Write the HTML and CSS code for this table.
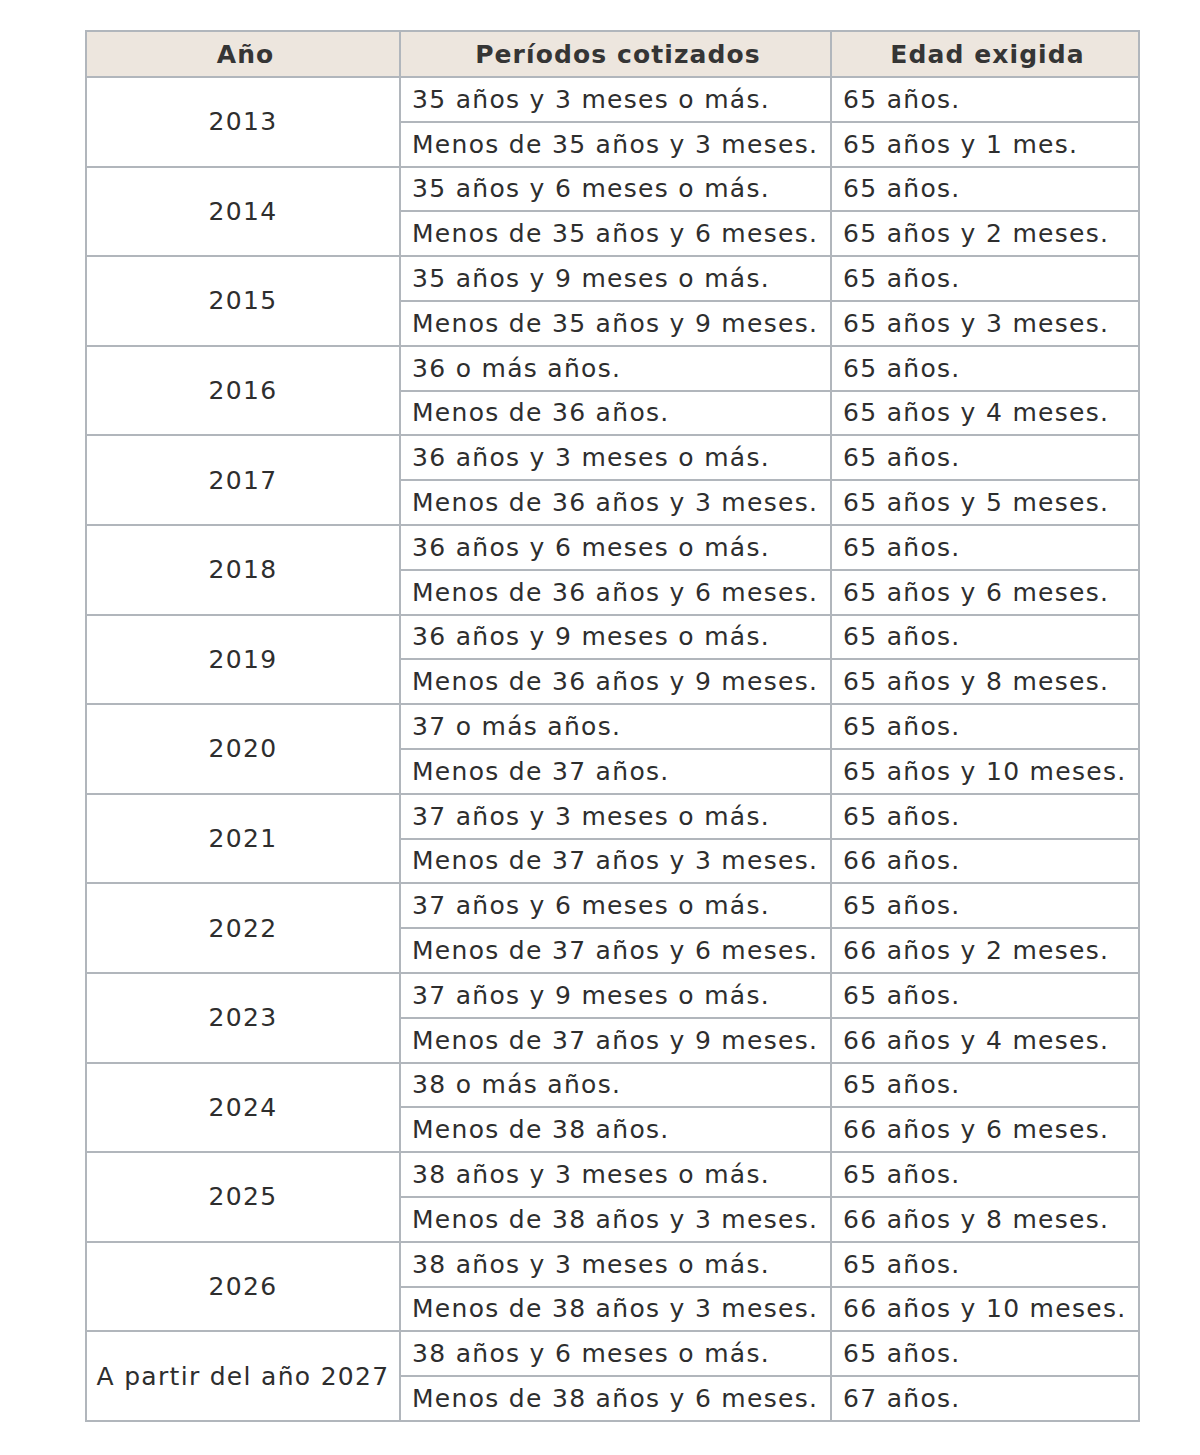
FILE: index.html
```html
<!DOCTYPE html>
<html lang="es">
<head>
<meta charset="utf-8">
<title>Edad de jubilación</title>
<link rel="stylesheet" href="styles.css">
</head>
<body>
<table class="tabla">
  <colgroup>
    <col class="c-year">
    <col class="c-period">
    <col class="c-age">
  </colgroup>
  <thead>
    <tr><th>Año</th><th>Períodos cotizados</th><th>Edad exigida</th></tr>
  </thead>
  <tbody>
    <tr><td class="year" rowspan="2">2013</td><td>35 años y 3 meses o más.</td><td>65 años.</td></tr>
    <tr><td>Menos de 35 años y 3 meses.</td><td>65 años y 1 mes.</td></tr>
    <tr><td class="year" rowspan="2">2014</td><td>35 años y 6 meses o más.</td><td>65 años.</td></tr>
    <tr><td>Menos de 35 años y 6 meses.</td><td>65 años y 2 meses.</td></tr>
    <tr><td class="year" rowspan="2">2015</td><td>35 años y 9 meses o más.</td><td>65 años.</td></tr>
    <tr><td>Menos de 35 años y 9 meses.</td><td>65 años y 3 meses.</td></tr>
    <tr><td class="year" rowspan="2">2016</td><td>36 o más años.</td><td>65 años.</td></tr>
    <tr><td>Menos de 36 años.</td><td>65 años y 4 meses.</td></tr>
    <tr><td class="year" rowspan="2">2017</td><td>36 años y 3 meses o más.</td><td>65 años.</td></tr>
    <tr><td>Menos de 36 años y 3 meses.</td><td>65 años y 5 meses.</td></tr>
    <tr><td class="year" rowspan="2">2018</td><td>36 años y 6 meses o más.</td><td>65 años.</td></tr>
    <tr><td>Menos de 36 años y 6 meses.</td><td>65 años y 6 meses.</td></tr>
    <tr><td class="year" rowspan="2">2019</td><td>36 años y 9 meses o más.</td><td>65 años.</td></tr>
    <tr><td>Menos de 36 años y 9 meses.</td><td>65 años y 8 meses.</td></tr>
    <tr><td class="year" rowspan="2">2020</td><td>37 o más años.</td><td>65 años.</td></tr>
    <tr><td>Menos de 37 años.</td><td>65 años y 10 meses.</td></tr>
    <tr><td class="year" rowspan="2">2021</td><td>37 años y 3 meses o más.</td><td>65 años.</td></tr>
    <tr><td>Menos de 37 años y 3 meses.</td><td>66 años.</td></tr>
    <tr><td class="year" rowspan="2">2022</td><td>37 años y 6 meses o más.</td><td>65 años.</td></tr>
    <tr><td>Menos de 37 años y 6 meses.</td><td>66 años y 2 meses.</td></tr>
    <tr><td class="year" rowspan="2">2023</td><td>37 años y 9 meses o más.</td><td>65 años.</td></tr>
    <tr><td>Menos de 37 años y 9 meses.</td><td>66 años y 4 meses.</td></tr>
    <tr><td class="year" rowspan="2">2024</td><td>38 o más años.</td><td>65 años.</td></tr>
    <tr><td>Menos de 38 años.</td><td>66 años y 6 meses.</td></tr>
    <tr><td class="year" rowspan="2">2025</td><td>38 años y 3 meses o más.</td><td>65 años.</td></tr>
    <tr><td>Menos de 38 años y 3 meses.</td><td>66 años y 8 meses.</td></tr>
    <tr><td class="year" rowspan="2">2026</td><td>38 años y 3 meses o más.</td><td>65 años.</td></tr>
    <tr><td>Menos de 38 años y 3 meses.</td><td>66 años y 10 meses.</td></tr>
    <tr><td class="year" rowspan="2">A partir del año 2027</td><td>38 años y 6 meses o más.</td><td>65 años.</td></tr>
    <tr><td>Menos de 38 años y 6 meses.</td><td>67 años.</td></tr>
  </tbody>
</table>
</body>
</html>
```

FILE: styles.css
```css
html, body {
  margin: 0;
  padding: 0;
  background: #ffffff;
}

body {
  padding: 30px 0 0 85px;
  font-family: "DejaVu Sans", Verdana, sans-serif;
  color: #2e2e2e;
}

.tabla {
  border-collapse: collapse;
  table-layout: fixed;
  width: 1053px;
  font-size: 25px;
  letter-spacing: 1.3px;
  border: 2px solid #b1b6bc;
}

.c-year { width: 314px; }
.c-period { width: 431px; }
.c-age { width: 308px; }

.tabla th,
.tabla td {
  border: 2px solid #b1b6bc;
  padding: 0 6px 0 11px;
  height: 44.8px;
  box-sizing: border-box;
  white-space: nowrap;
  line-height: 1;
  vertical-align: middle;
}

.tabla th {
  background: #ede6de;
  font-weight: bold;
  text-align: center;
  height: 46px;
  color: #353535;
  letter-spacing: 1.1px;
}

.tabla td {
  text-align: left;
}

.tabla td.year {
  text-align: center;
  padding: 0 4px;
}
```
